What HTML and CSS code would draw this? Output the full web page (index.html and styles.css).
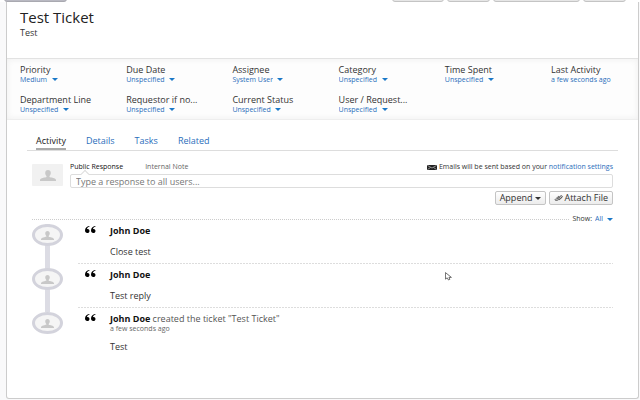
FILE: index.html
```html
<!DOCTYPE html>
<html lang="en">
<head>
  <meta charset="UTF-8">
  <meta name="viewport" content="width=device-width, initial-scale=1.0">
  <title>Test Ticket</title>
  <link rel="stylesheet" href="styles.css">
</head>
<body>

  <!-- shared icons -->
  <svg class="sprite" aria-hidden="true">
    <symbol id="person" viewBox="0 0 16 11" preserveAspectRatio="none">
      <path d="M8 0C6.200 0 5.200 1.200 5.200 2.900c0 1.500.6 2.400 1.300 3.100v1C5.500 7.600 0 7.700 0 10.200V11h16v-.8C16 7.700 10.500 7.600 9.500 7V6c.7-.7 1.300-1.600 1.300-3.100C10.800 1.200 9.800 0 8 0z"/>
    </symbol>
    <symbol id="quote" viewBox="0 0 22 14" preserveAspectRatio="none">
      <path d="M8.500 0C3.500.5 0 4 0 9c0 3 1.800 5 4.600 5C7.200 14 9 12.200 9 9.900 9 7.600 7.400 6 5.200 6c-.6 0-1 .1-1.400.3C4.300 3.800 6 2.300 9 1.600z"/>
      <path d="M20.500 0C15.500.5 12 4 12 9c0 3 1.800 5 4.600 5 2.600 0 4.400-1.800 4.400-4.100C21 7.600 19.400 6 17.200 6c-.6 0-1 .1-1.400.3.5-2.500 2.200-4 5.200-4.700z"/>
    </symbol>
  </svg>

  <div class="toolbar">
    <button class="tool back" aria-label="Back"></button>
    <button class="tool reply" aria-label="Reply"></button>
    <button class="tool edit" aria-label="Edit"></button>
    <button class="tool assign" aria-label="Assign"></button>
    <button class="tool close" aria-label="Close"></button>
  </div>

  <main class="ticket">
    <header class="ticket-header">
      <h1>Test Ticket</h1>
      <p>Test</p>
    </header>

    <section class="fields">
      <div class="field">
        <label for="priority">Priority</label>
        <span class="dropdown"><select id="priority"><option>Medium</option></select></span>
      </div>
      <div class="field">
        <label for="due">Due Date</label>
        <span class="dropdown"><select id="due"><option>Unspecified</option></select></span>
      </div>
      <div class="field">
        <label for="assignee">Assignee</label>
        <span class="dropdown"><select id="assignee"><option>System User</option></select></span>
      </div>
      <div class="field">
        <label for="category">Category</label>
        <span class="dropdown"><select id="category"><option>Unspecified</option></select></span>
      </div>
      <div class="field">
        <label for="time">Time Spent</label>
        <span class="dropdown"><select id="time"><option>Unspecified</option></select></span>
      </div>
      <div class="field">
        <span class="field-name">Last Activity</span>
        <a href="#activity">a few seconds ago</a>
      </div>
      <div class="field">
        <label for="department">Department Line</label>
        <span class="dropdown"><select id="department"><option>Unspecified</option></select></span>
      </div>
      <div class="field">
        <label for="requestor">Requestor if no...</label>
        <span class="dropdown"><select id="requestor"><option>Unspecified</option></select></span>
      </div>
      <div class="field">
        <label for="status">Current Status</label>
        <span class="dropdown"><select id="status"><option>Unspecified</option></select></span>
      </div>
      <div class="field">
        <label for="user">User / Request...</label>
        <span class="dropdown"><select id="user"><option>Unspecified</option></select></span>
      </div>
    </section>

    <nav class="tabs">
      <a class="active" href="#activity">Activity</a>
      <a href="#details">Details</a>
      <a href="#tasks">Tasks</a>
      <a href="#related">Related</a>
    </nav>

    <section class="composer">
      <div class="avatar"><svg><use href="#person"/></svg></div>
      <div class="composer-body">
        <div class="composer-top">
          <button class="mode active">Public Response</button>
          <button class="mode">Internal Note</button>
          <p class="notice">
            <svg class="envelope" viewBox="0 0 20 10" preserveAspectRatio="none">
              <rect width="20" height="10" rx="1" fill="#222"/>
              <path d="M1 1l9 5 9-5M1 9l6-4M19 9l-6-4" fill="none" stroke="#fff" stroke-width="1"/>
            </svg>
            <span>Emails will be sent based on your <a href="#settings">notification settings</a></span>
          </p>
        </div>
        <input class="response" type="text" aria-label="Response" placeholder="Type a response to all users...">
        <div class="actions">
          <button class="btn">Append <span class="caret"></span></button>
          <button class="btn">
            <svg class="clip" viewBox="0 0 20 12">
              <path d="M5 9l8-7c2-1.500 5 0 3 2L8 10c-3 2-8 1-5-2l7-6M7 8l6-5M10 10l7-6" fill="none" stroke="#444" stroke-width="1.600"/>
            </svg>
            Attach File
          </button>
        </div>
      </div>
    </section>

    <section class="activity" id="activity">
      <div class="filter">
        <span class="rule"></span>
        <label for="show">Show:</label>
        <span class="dropdown"><select id="show"><option>All</option></select></span>
      </div>

      <article class="entry">
        <div class="rail"><div class="round"><svg><use href="#person"/></svg></div></div>
        <div class="entry-body">
          <svg class="quote"><use href="#quote"/></svg>
          <div>
            <h2>John Doe</h2>
            <p class="message">Close test</p>
          </div>
        </div>
      </article>
      <article class="entry">
        <div class="rail"><div class="round"><svg><use href="#person"/></svg></div></div>
        <div class="entry-body">
          <svg class="quote"><use href="#quote"/></svg>
          <div>
            <h2>John Doe</h2>
            <p class="message">Test reply</p>
          </div>
        </div>
      </article>
      <article class="entry">
        <div class="rail"><div class="round"><svg><use href="#person"/></svg></div></div>
        <div class="entry-body">
          <svg class="quote"><use href="#quote"/></svg>
          <div>
            <h2>John Doe <span>created the ticket "Test Ticket"</span></h2>
            <p class="when">a few seconds ago</p>
            <p class="message">Test</p>
          </div>
        </div>
      </article>
    </section>
  </main>

  <svg class="pointer" viewBox="0 0 8 10" aria-hidden="true">
    <path d="M.5.500v7.500l2-1.500 1.500 2.500 1.500-.7L4.500 6h2.800z" fill="#fff" stroke="#333" stroke-width=".8"/>
  </svg>

</body>
</html>
```

FILE: styles.css
```css
* {
  box-sizing: border-box;
}

body {
  margin: 0;
  min-height: 100vh;
  display: flex;
  flex-direction: column;
  background: #f9f9fa;
  font-family: "Open Sans", sans-serif;
  font-size: 9px;
  line-height: 10px;
  color: #333;
}

h1, h2, p {
  margin: 0;
  font-weight: normal;
}

a {
  color: #2a6ebb;
  text-decoration: none;
}

button, select, input {
  font: inherit;
  color: inherit;
  margin: 0;
}

.sprite {
  display: none;
}

/* bottom edge of the button bar */
.toolbar {
  display: flex;
  align-items: flex-end;
  gap: 3px;
  height: 2px;
  padding: 0 14px 0 4px;
  overflow: hidden;
  background: #fff;
}

.tool {
  flex: none;
  height: 20px;
  padding: 0;
  border: 1px solid #c4c4c4;
  border-radius: 3px;
  background: #e6e6e6;
}

.back {
  width: 63px;
  margin-right: auto;
  border-color: #a9a9b0;
  background: #b9b9c2;
}

.reply {
  width: 52px;
}

.edit {
  width: 43px;
}

.assign {
  width: 87px;
}

.close {
  width: 43px;
}

.ticket {
  flex: 1;
  margin: 0 1px 1px 6px;
  border: 1px solid #ccc;
  border-top: 0;
  border-radius: 0 0 3px 3px;
  background: #fff;
}

.ticket-header {
  height: 56px;
  padding: 6px 13px;
}

.ticket-header h1 {
  font-size: 15px;
  line-height: 18px;
  color: #222;
}

.ticket-header p {
  line-height: 14px;
}

.fields {
  display: grid;
  grid-template-columns: repeat(5, 1fr) 87px;
  row-gap: 11px;
  padding: 6px 0 5px 13px;
  border-top: 1px solid #e2e2e2;
  border-bottom: 1px solid #eee;
  background: #fdfdfd;
  box-shadow: inset 0 0 6px #eee;
}

.field {
  display: flex;
  flex-direction: column;
  align-items: flex-start;
}

.field a, .field .dropdown {
  font-size: 7px;
  line-height: 9px;
}

.dropdown {
  display: flex;
  align-items: center;
  gap: 4px;
  color: #2a6ebb;
}

.dropdown select {
  appearance: none;
  padding: 0;
  border: 0;
  background: none;
  cursor: pointer;
}

.dropdown::after, .caret {
  content: "";
  border: 3px solid transparent;
  border-top-color: #1a78c8;
  border-bottom: 0;
}

.tabs {
  display: flex;
  gap: 20px;
  margin: 14px 20px 0;
  padding: 0 9px;
  border-bottom: 1px solid #ddd;
}

.tabs a {
  height: 16px;
  line-height: 14px;
}

.tabs .active {
  color: #222;
  border-bottom: 2px solid #aaa;
}

.composer {
  display: flex;
  gap: 7px;
  margin: 11px 25px 0;
}

.avatar {
  display: flex;
  align-items: center;
  justify-content: center;
  flex: none;
  width: 31px;
  height: 22px;
  margin-top: 2px;
  border-radius: 1px;
  background: #f1f1f1;
}

.avatar svg {
  width: 16px;
  height: 11px;
  fill: #c8c8c8;
}

.composer-body {
  flex: 1;
}

.composer-top {
  display: flex;
  gap: 22px;
  font-size: 7px;
}

.mode {
  padding: 0;
  border: 0;
  background: none;
  color: #666;
}

/* small notch above the text box */
.mode.active {
  position: relative;
  color: #111;
}

.mode.active::after {
  content: "";
  position: absolute;
  left: 12px;
  bottom: -5px;
  width: 5px;
  height: 5px;
  border: 1px solid #ddd;
  border-right: 0;
  border-bottom: 0;
  background: #fff;
  transform: rotate(45deg);
}

.notice {
  display: flex;
  align-items: center;
  gap: 2px;
  margin-left: auto;
}

.envelope {
  width: 10px;
  height: 5px;
}

.response {
  display: block;
  width: 100%;
  height: 14px;
  margin-top: 2px;
  padding: 0 5px;
  border: 1px solid #ddd;
  border-radius: 2px;
}

.response::placeholder {
  color: #777;
}

.actions {
  display: flex;
  justify-content: flex-end;
  gap: 3px;
  margin-top: 3px;
}

.btn {
  display: flex;
  align-items: center;
  height: 14px;
  padding: 0 4px;
  border: 1px solid #c4c4c4;
  border-radius: 2px;
  background: linear-gradient(#fff, #ececec);
}

.caret {
  margin-left: 3px;
  border-top-color: #333;
}

.clip {
  width: 10px;
  height: 6px;
}

.activity {
  margin: 9px 25px 0;
}

.filter {
  display: flex;
  align-items: center;
  gap: 3px;
  font-size: 7px;
}

.rule {
  flex: 1;
  border-top: 1px dotted #ccc;
}

.entry {
  display: flex;
  gap: 15px;
  min-height: 44px;
}

.rail {
  flex: none;
  width: 31px;
  background: linear-gradient(#dcdce4, #dcdce4) center / 5px 100% no-repeat;
}

.entry:last-child .rail {
  background: none;
}

.round {
  display: flex;
  align-items: center;
  justify-content: center;
  height: 22px;
  border: 3px solid #d3d3dc;
  border-radius: 50%;
  background: #f5f5f5;
}

.round svg {
  width: 13px;
  height: 9px;
  fill: #c8c8c8;
}

.entry-body {
  display: flex;
  flex: 1;
  gap: 14px;
  padding: 2px 0 0 7px;
}

.entry:not(:last-child) .entry-body {
  background: linear-gradient(90deg, #ddd 67%, transparent 67%) 0 39px / 3px 1px repeat-x;
}

.quote {
  flex: none;
  width: 11px;
  height: 7px;
}

.entry h2 {
  font-size: 9px;
  font-weight: bold;
  color: #111;
}

.entry h2 span {
  font-weight: normal;
  color: #555;
}

.message {
  margin-top: 11px;
}

.when {
  font-size: 7px;
  color: #666;
}

.when + .message {
  margin-top: 8px;
}

.pointer {
  position: absolute;
  left: 445px;
  top: 272px;
  width: 7px;
  height: 9px;
}
```
